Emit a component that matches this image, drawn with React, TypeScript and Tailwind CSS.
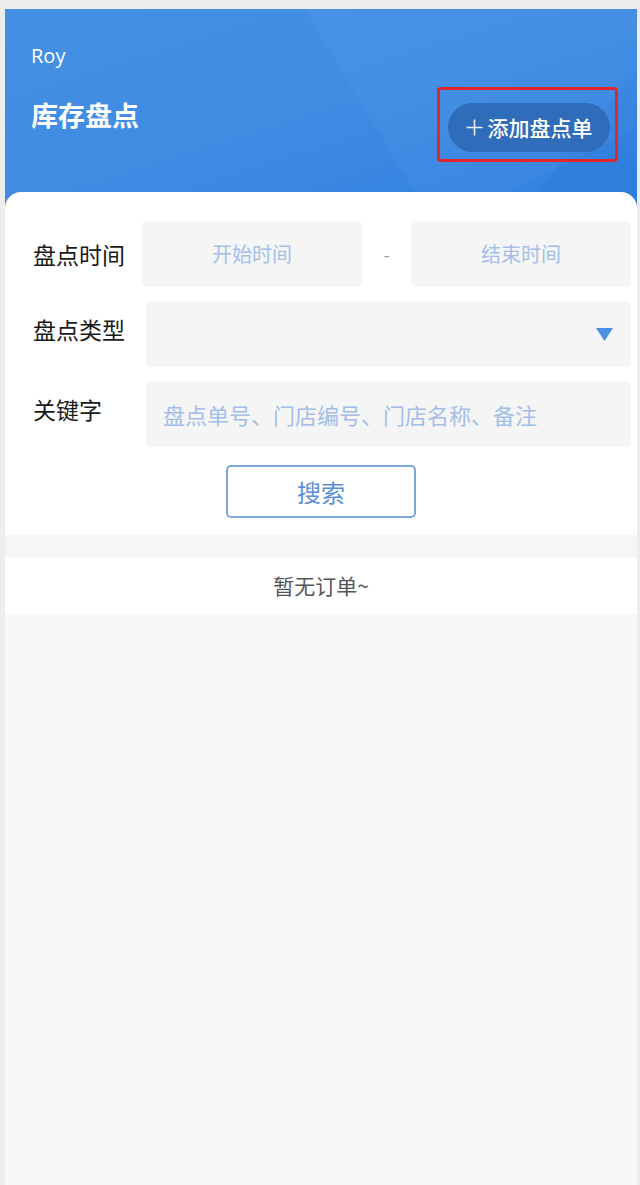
import React from "react";

const cjk = { fontFamily: '"Noto Sans CJK SC", "Noto Sans", sans-serif' };

function Field({ children, className = "" }: { children?: React.ReactNode; className?: string }) {
  return (
    <div className={`flex h-[66px] items-center rounded-[5px] bg-[#f5f5f5] ${className}`}>{children}</div>
  );
}

export default function App() {
  return (
    <div className="min-h-[1185px] bg-[#ededed] pt-[9px] pl-[5px] pr-[3px]" style={cjk}>
      <div className="flex min-h-[1176px] flex-col bg-[#f7f8f6]">
        {/* 顶部蓝色区域 */}
        <header className="relative h-[199px] overflow-hidden bg-gradient-to-br from-[#4490e4] via-[#3f8ce3] to-[#2f7fdf] pl-[26px] pr-[19px] pt-[35px]">
          <svg aria-hidden className="absolute inset-0 h-full w-full" viewBox="0 0 633 199" preserveAspectRatio="none">
            <polygon points="300,0 633,0 633,120 470,199 420,199" fill="#ffffff" opacity="0.035" />
            <polygon points="520,199 633,60 633,199" fill="#1f6fd6" opacity="0.15" />
          </svg>
          <div className="relative text-[20px] leading-[24px] text-white" style={{ fontFamily: '"Open Sans", "Noto Sans", sans-serif' }}>
            Roy
          </div>
          <div className="relative mt-[19px] flex items-start justify-between">
            <h1 className="mt-[14px] text-[27px] font-bold leading-[28px] text-white">库存盘点</h1>
            <div className="h-[75px] w-[181px] rounded-[4px] border-[3px] border-[#e3262b] pl-[8px] pt-[13px]">
              <button className="flex h-[49px] w-[162px] items-center justify-center gap-[5px] rounded-full bg-[#2f6cba] text-[21px] font-medium text-white">
                <svg width="17" height="17" viewBox="0 0 17 17" className="opacity-90">
                  <path d="M8.5 0.5v16M0.5 8.5h16" stroke="#ffffff" strokeWidth="1.6" fill="none" />
                </svg>
                <span>添加盘点单</span>
              </button>
            </div>
          </div>
        </header>

        {/* 搜索表单 */}
        <section className="relative -mt-[16px] rounded-t-[16px] bg-white pb-[17px] pl-[28px] pr-[6px] pt-[29px]">
          <div className="flex items-center">
            <div className="w-[109px] text-[23px] text-[#1a1a1a]">盘点时间</div>
            <Field className="w-[220px] justify-center">
              <span className="text-[20px] text-[#a3bfe9]">开始时间</span>
            </Field>
            <div className="w-[49px] text-center text-[18px] text-[#a0a0a0]">-</div>
            <Field className="w-[220px] justify-center">
              <span className="text-[20px] text-[#a3bfe9]">结束时间</span>
            </Field>
          </div>

          <div className="mt-[14px] flex items-center">
            <div className="mb-[10px] w-[113px] text-[23px] text-[#1a1a1a]">盘点类型</div>
            <Field className="flex-1 justify-end pr-[18px]">
              <svg width="17" height="13" viewBox="0 0 17 13">
                <polygon points="0,0 17,0 8.5,13" fill="#4a8fe0" />
              </svg>
            </Field>
          </div>

          <div className="mt-[14px] flex items-center">
            <div className="mb-[10px] w-[113px] text-[23px] text-[#1a1a1a]">关键字</div>
            <Field className="flex-1 pl-[17px]">
              <span className="text-[22px] text-[#a3bfe9]">盘点单号、门店编号、门店名称、备注</span>
            </Field>
          </div>

          <div className="mt-[18px] flex justify-center pr-[22px]">
            <button className="h-[53px] w-[190px] rounded-[5px] border-2 border-[#7ea7d9] text-[24px] text-[#5a8fd7]">
              搜索
            </button>
          </div>
        </section>

        <div className="h-[23px] bg-[#f5f6f5]" />

        <div className="flex h-[56px] items-center justify-center bg-white text-[21px] text-[#555555]">暂无订单~</div>

        <div className="flex-1 bg-[#f7f8f6]" />
      </div>
    </div>
  );
}
